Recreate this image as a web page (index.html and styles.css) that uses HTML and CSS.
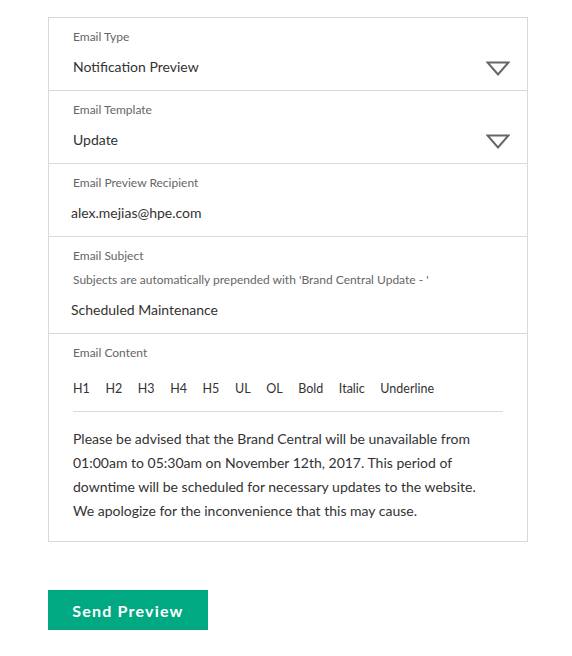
FILE: index.html
```html
<!DOCTYPE html>
<html>
<head>
<meta charset="utf-8">
<link rel="stylesheet" href="styles.css">
</head>
<body>
<div class="page">
  <div class="card">
    <div class="row">
      <div class="label">Email Type</div>
      <div class="select">
        <span class="value">Notification Preview</span>
        <svg class="caret" width="24" height="15" viewBox="0 0 24 15"><path d="M1.5 1.5 H22.5 L12 13.5 Z" fill="none" stroke="#666" stroke-width="2" stroke-linejoin="miter"/></svg>
      </div>
    </div>
    <div class="row">
      <div class="label">Email Template</div>
      <div class="select">
        <span class="value">Update</span>
        <svg class="caret" width="24" height="15" viewBox="0 0 24 15"><path d="M1.5 1.5 H22.5 L12 13.5 Z" fill="none" stroke="#666" stroke-width="2" stroke-linejoin="miter"/></svg>
      </div>
    </div>
    <div class="row">
      <div class="label">Email Preview Recipient</div>
      <div class="value input">alex.mejias@hpe.com</div>
    </div>
    <div class="row">
      <div class="label">Email Subject</div>
      <div class="hint">Subjects are automatically prepended with 'Brand Central Update - '</div>
      <div class="value input">Scheduled Maintenance</div>
    </div>
    <div class="row content">
      <div class="label">Email Content</div>
      <div class="toolbar">
        <span>H1</span><span>H2</span><span>H3</span><span>H4</span><span>H5</span><span>UL</span><span>OL</span><span>Bold</span><span>Italic</span><span>Underline</span>
      </div>
      <p class="body-text">Please be advised that the Brand Central will be unavailable from 01:00am to 05:30am on November 12th, 2017. This period of downtime will be scheduled for necessary updates to the website. We apologize for the inconvenience that this may cause.</p>
    </div>
  </div>
  <button class="send">Send Preview</button>
</div>
</body>
</html>
```

FILE: styles.css
```css
html, body {
  margin: 0;
  padding: 0;
  background: #fff;
}
body {
  font-family: "Lato", "Liberation Sans", sans-serif;
  color: #333;
}
.page {
  padding: 17px 0 0 48px;
}
.card {
  width: 478px;
  border: 1px solid #d9d9d9;
}
.row {
  padding: 11px 24px 13px 24px;
  border-top: 1px solid #d9d9d9;
}
.row:first-child {
  border-top: none;
}
.label {
  font-size: 12px;
  line-height: 16px;
  color: #666;
}
.hint {
  font-size: 12px;
  line-height: 16px;
  color: #666;
  margin-top: 8px;
}
.select {
  display: flex;
  align-items: center;
  justify-content: space-between;
  margin-top: 12px;
  height: 20px;
}
.value {
  font-size: 14px;
  line-height: 20px;
  color: #333;
}
.input {
  margin-top: 12px;
  margin-left: -2px;
}
.caret {
  display: block;
  margin-right: -7px;
  margin-top: 2px;
}
.toolbar {
  display: flex;
  gap: 15.6px;
  font-size: 12.5px;
  line-height: 18px;
  color: #333;
  margin-top: 19px;
  padding-bottom: 13px;
  border-bottom: 1px solid #d9d9d9;
}
.row.content {
  padding-bottom: 18px;
}
.body-text {
  margin: 15px 0 0 0;
  padding-right: 20px;
  font-size: 14px;
  line-height: 24px;
  color: #333;
}
.send {
  display: block;
  margin-top: 48px;
  width: 160px;
  height: 40px;
  background: #01a982;
  border: none;
  color: #fff;
  font-family: "Lato", "Liberation Sans", sans-serif;
  font-weight: 700;
  font-size: 16px;
  letter-spacing: 1.2px;
  padding: 0;
}
```
